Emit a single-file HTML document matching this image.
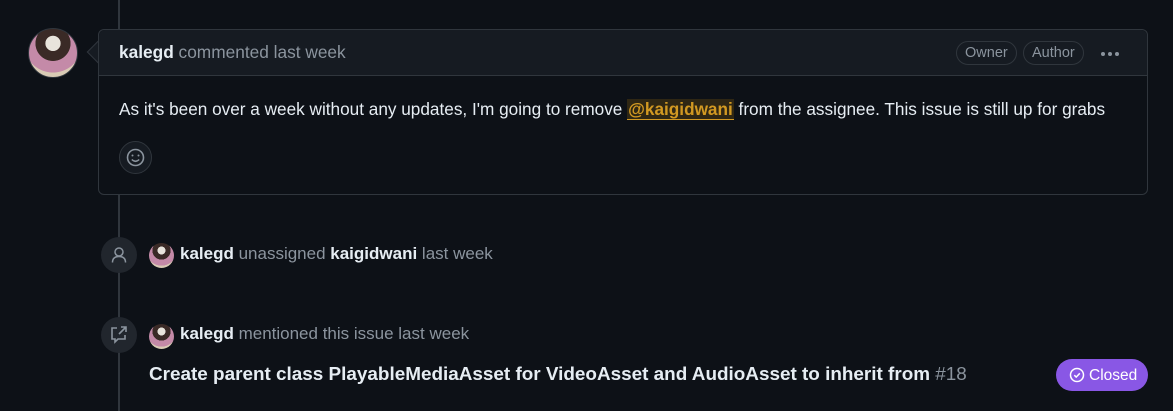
<!DOCTYPE html>
<html><head><meta charset="utf-8"><style>
*{box-sizing:border-box;margin:0;padding:0}
body{width:1173px;height:411px;background:#0d1117;font-family:"Liberation Sans",sans-serif;color:#e6edf3;position:relative;overflow:hidden}
.line{position:absolute;left:118px;width:2px;background:#30363d}
.ava{position:absolute;border-radius:50%;background:radial-gradient(circle at 50% 30%,#e8e4dc 0 18%,#3a2a26 19% 42%,#c48aa8 43% 70%,#d9cbb5 71%);}
.box{position:absolute;left:98px;top:29px;width:1050px;height:166px;border:1px solid #30363d;border-radius:6px;background:#0d1117}
.hdr{height:46px;background:#161b22;border-bottom:1px solid #30363d;border-radius:6px 6px 0 0;padding-left:20px;font-size:17.3px;line-height:45px;color:#8b949e}
.hdr b{color:#e6edf3}
.pill{position:absolute;top:11px;height:24px;border:1px solid #30363d;border-radius:12px;font-size:14.5px;line-height:22px;color:#8b949e;padding:0 8px}
.arrow{position:absolute;left:90px;top:44px;width:16px;height:16px;background:#161b22;border-left:1px solid #30363d;border-bottom:1px solid #30363d;transform:rotate(45deg)}
.body{position:absolute;left:20px;top:69px;font-size:17.2px;white-space:nowrap}
.mention{color:#d29922;background:rgba(187,128,9,.2);border-bottom:1px solid #d29922;font-weight:bold;padding:0 1px}
.emo{position:absolute;left:20px;top:111px;width:33px;height:33px;border-radius:50%;border:1px solid #30363d;background:#161b22}
.ic{position:absolute;left:101px;width:36px;height:36px;border-radius:50%;background:#21262d}
.ev{position:absolute;left:180px;font-size:17px;color:#8b949e;white-space:nowrap}
.ev b{color:#e6edf3}
</style></head><body>
<div class="line" style="top:0;height:29px"></div>
<div class="line" style="top:194px;height:217px"></div>
<div class="ava" style="left:28px;top:28px;width:50px;height:50px;border:1px solid #30363d"></div>
<div class="arrow"></div>
<div class="box">
 <div class="hdr"><b>kalegd</b> commented last week</div>
 <div class="pill" style="left:857px">Owner</div>
 <div class="pill" style="left:924px">Author</div>
 <div style="position:absolute;left:1002px;top:22px;display:flex;gap:3px"><i style="width:4px;height:4px;border-radius:50%;background:#8b949e"></i><i style="width:4px;height:4px;border-radius:50%;background:#8b949e"></i><i style="width:4px;height:4px;border-radius:50%;background:#8b949e"></i></div>
 <div class="body">As it's been over a week without any updates, I'm going to remove <span class="mention">@kaigidwani</span> from the assignee. This issue is still up for grabs</div>
 <div class="emo"><svg width="31" height="31" viewBox="0 0 31 31"><circle cx="15.5" cy="15.5" r="8" fill="none" stroke="#8b949e" stroke-width="1.6"/><circle cx="12.5" cy="13.5" r="1" fill="#8b949e"/><circle cx="18.5" cy="13.5" r="1" fill="#8b949e"/><path d="M11.8 17.5q3.7 3.6 7.4 0" fill="none" stroke="#8b949e" stroke-width="1.5"/></svg></div>
</div>
<div class="ic" style="top:237px"><svg width="36" height="36" viewBox="0 0 36 36"><circle cx="18" cy="15" r="4" fill="none" stroke="#8b949e" stroke-width="1.5"/><path d="M11.5 25.5q0-6 6.5-6t6.5 6" fill="none" stroke="#8b949e" stroke-width="1.5"/></svg></div>
<div class="ava" style="left:149px;top:243px;width:25px;height:25px"></div>
<div class="ev" style="top:244px"><b>kalegd</b> unassigned <b>kaigidwani</b> last week</div>
<div class="ic" style="top:317px"><svg width="36" height="36" viewBox="0 0 36 36"><path d="M16 11h-5v11h3v3l3-3h7v-4" fill="none" stroke="#8b949e" stroke-width="1.6"/><path d="M18 17l7-7M20 10h5v5" fill="none" stroke="#8b949e" stroke-width="1.6"/></svg></div>
<div class="ava" style="left:149px;top:324px;width:25px;height:25px"></div>
<div class="ev" style="top:324px"><b>kalegd</b> mentioned this issue last week</div>
<div style="position:absolute;left:149px;top:364px;font-size:18.9px;font-weight:bold;color:#e6edf3;white-space:nowrap">Create parent class PlayableMediaAsset for VideoAsset and AudioAsset to inherit from <span style="font-weight:normal;color:#8b949e">#18</span></div>
<div style="position:absolute;left:1056px;top:359px;width:92px;height:32px;border-radius:16px;background:#8957e5;color:#fff;font-size:15.5px;line-height:33px;padding-left:33px">Closed<svg style="position:absolute;left:13px;top:8px" width="16" height="16" viewBox="0 0 16 16"><circle cx="8" cy="8" r="6.5" fill="none" stroke="#fff" stroke-width="1.5"/><path d="M5.3 8.2l1.9 1.9 3.6-3.8" fill="none" stroke="#fff" stroke-width="1.5"/></svg></div>
</body></html>
